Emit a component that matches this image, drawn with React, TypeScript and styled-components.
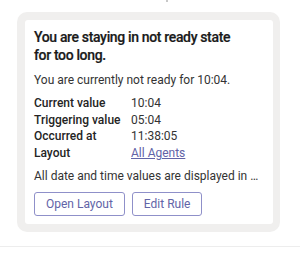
import React from 'react';
import styled, { createGlobalStyle } from 'styled-components';

const GlobalStyle = createGlobalStyle`
  html, body {
    margin: 0;
    padding: 0;
    background: #ffffff;
  }
  body {
    font-family: Roboto, "Noto Sans", sans-serif;
    color: #242424;
  }
`;

interface DetailRow {
  label: string;
  value: string;
  link?: boolean;
}

const rows: DetailRow[] = [
  { label: 'Current value', value: '10:04' },
  { label: 'Triggering value', value: '05:04' },
  { label: 'Occurred at', value: '11:38:05' },
  { label: 'Layout', value: 'All Agents', link: true },
];

const App: React.FC = () => {
  return (
    <Page>
      <GlobalStyle />
      <Pointer />
      <Frame>
        <Card>
          <Title>
            You are staying in not ready state
            <br />
            for too long.
          </Title>
          <Message>You are currently not ready for 10:04.</Message>
          <Details>
            {rows.map((row) => (
              <React.Fragment key={row.label}>
                <Label>{row.label}</Label>
                {row.link ? <Link href="#">{row.value}</Link> : <Value>{row.value}</Value>}
              </React.Fragment>
            ))}
          </Details>
          <Note>All date and time values are displayed in …</Note>
          <Actions>
            <ActionButton>Open Layout</ActionButton>
            <ActionButton>Edit Rule</ActionButton>
          </Actions>
        </Card>
      </Frame>
      <Divider />
    </Page>
  );
};

const Page = styled.div`
  width: 300px;
  height: 260px;
  padding-top: 12px;
  box-sizing: border-box;
  position: relative;
`;

const Pointer = styled.div`
  position: absolute;
  top: 0;
  left: 166px;
  width: 2px;
  height: 2px;
  background: #c8c8c8;
`;

const Frame = styled.div`
  margin-left: 17px;
  width: 263px;
  box-sizing: border-box;
  padding: 8px 7px 8px 8px;
  background: #f0efee;
  border-radius: 10px;
`;

const Card = styled.div`
  background: #ffffff;
  border-radius: 3px;
  padding: 8px 9px 8px 9px;
  display: flex;
  flex-direction: column;
`;

const Title = styled.div`
  font-size: 14px;
  font-weight: 500;
  letter-spacing: -0.35px;
  line-height: 18px;
  color: #1a1a1a;
  -webkit-text-stroke: 0.2px #1a1a1a;
  white-space: nowrap;
`;

const Message = styled.div`
  margin-top: 7.5px;
  font-size: 12px;
  line-height: 17px;
  color: #333333;
`;

const Details = styled.div`
  margin-top: 6.75px;
  display: grid;
  grid-template-columns: 97px 1fr;
  font-size: 12px;
  line-height: 16.5px;
`;

const Label = styled.div`
  font-weight: 500;
  color: #242424;
`;

const Value = styled.div`
  color: #333333;
`;

const Link = styled.a`
  color: #6264a7;
  text-decoration: underline;
  justify-self: start;
`;

const Note = styled.div`
  margin-top: 6.5px;
  font-size: 12px;
  line-height: 17px;
  color: #333333;
  white-space: nowrap;
`;

const Actions = styled.div`
  margin-top: 7px;
  display: flex;
  gap: 7px;
`;

const ActionButton = styled.button`
  height: 24px;
  padding: 0 11px;
  background: #ffffff;
  border: 1px solid #8f90c9;
  border-radius: 3px;
  color: #6264a7;
  font-family: Roboto, "Noto Sans", sans-serif;
  font-size: 12px;
  cursor: pointer;
`;

const Divider = styled.div`
  position: absolute;
  left: 0;
  right: 0;
  top: 246px;
  height: 1px;
  background: #ededed;
`;

export default App;
